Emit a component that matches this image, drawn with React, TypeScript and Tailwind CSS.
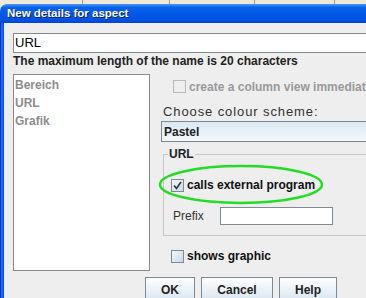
import React from "react";

function Check({ checked = false, disabled = false }: { checked?: boolean; disabled?: boolean }) {
  if (disabled) {
    return <div className="w-[13px] h-[13px] border border-[#b8b8b8] bg-[#eeeeee] shrink-0" />;
  }
  return (
    <div className="w-[13px] h-[13px] border border-[#7a8a99] bg-[linear-gradient(135deg,#f4f8fc_0%,#c8d8ea_100%)] shrink-0 flex items-center justify-center">
      {checked && (
        <svg width="9" height="9" viewBox="0 0 9 9">
          <path d="M1 4.5 L3.5 7.5 L8 1" fill="none" stroke="#333333" strokeWidth="1.6" />
        </svg>
      )}
    </div>
  );
}

function Btn({ label, w }: { label: string; w: string }) {
  return (
    <div
      className={`${w} h-[26px] shrink-0 border border-[#7a8a99] bg-[linear-gradient(180deg,#ffffff_0%,#eef3f9_40%,#d8e4f0_100%)] flex items-center justify-center font-bold text-[12px] text-[#222]`}
    >
      {label}
    </div>
  );
}

export default function App() {
  return (
    <div
      className="w-[366px] h-[298px] overflow-hidden bg-[#eeeeee] flex flex-col relative"
      style={{ fontFamily: '"Liberation Sans", Arial, sans-serif' }}
    >
      {/* window behind */}
      <div className="h-[4px] shrink-0 flex bg-[#ece9d8]">
        <div className="w-[83px] border-r border-[#a0a0a0]" />
        <div className="w-[87px] border-r border-[#a0a0a0]" />
        <div className="w-[85px] border-r border-[#a0a0a0]" />
        <div className="w-[80px] border-r border-[#a0a0a0]" />
      </div>
      {/* title bar */}
      <div className="h-[19px] shrink-0 rounded-tl-[7px] bg-[linear-gradient(180deg,#4a98fa_0%,#0a62ea_18%,#0058e6_50%,#0054e2_80%,#0044cc_100%)] flex items-center pl-[7px]">
        <span className="text-white font-bold text-[11.5px] leading-none [text-shadow:1px_1px_0_#0a1e6e]">
          New details for aspect
        </span>
      </div>
      <div className="flex flex-1 min-h-0">
        {/* left frame */}
        <div className="w-[4px] shrink-0 flex">
          <div className="w-[1px] bg-[#0831d9]" />
          <div className="w-[2px] bg-[#166aee]" />
          <div className="w-[1px] bg-[#0855dd]" />
        </div>
        <div className="flex-1 min-w-0 pl-[9px] pt-[10px] flex flex-col">
          {/* name field */}
          <div className="h-[20px] mr-[-20px] border border-[#7f8a94] bg-white flex items-center pl-[1px] text-[13px] text-black">
            URL
          </div>
          <div className="mt-[1px] leading-[14px] text-[12px] font-bold text-[#222] whitespace-nowrap">
            The maximum length of the name is 20 characters
          </div>
          <div className="flex mt-[6px]">
            {/* list */}
            <div className="w-[137px] h-[197px] shrink-0 border border-[#8a8a8a] bg-white pt-[1px] pl-[1px]">
              <div className="text-[12px] font-bold text-[#8c8c8c] leading-[18px]">Bereich</div>
              <div className="text-[12px] font-bold text-[#8c8c8c] leading-[18px]">URL</div>
              <div className="text-[12px] font-bold text-[#8c8c8c] leading-[18px]">Grafik</div>
            </div>
            {/* right column */}
            <div className="ml-[11px] flex-1 min-w-0 flex flex-col mr-[-30px]">
              <div className="mt-[6px] pl-[12px] flex items-center h-[13px] whitespace-nowrap">
                <Check disabled />
                <span className="ml-[3px] text-[12px] font-bold text-[#999999]">
                  create a column view immediately
                </span>
              </div>
              <div className="mt-[11px] pl-[2px] text-[13px] leading-[15px] text-[#333] whitespace-nowrap tracking-[0.9px]">
                Choose colour scheme:
              </div>
              <div className="mt-[2px] h-[21px] border border-[#7a8a99] bg-[linear-gradient(180deg,#dde8f3_0%,#e8eff7_50%,#f4f8fc_100%)] flex items-center pl-[2px] text-[12px] font-bold text-[#222]">
                Pastel
              </div>
              <fieldset className="ml-[2px] mt-[5px] border border-[#c8c8c8] pb-[10px]">
                <legend className="ml-[4px] px-[1px] text-[12px] font-bold leading-[14px] text-[#222]">URL</legend>
                <div className="mt-[15px] pl-[7px] flex items-center whitespace-nowrap">
                  <Check checked />
                  <span className="ml-[3px] text-[12px] font-bold text-[#111]">calls external program</span>
                </div>
                <div className="mt-[13px] pl-[9px] flex items-center">
                  <span className="w-[47px] text-[12px] text-[#333]">Prefix</span>
                  <div className="w-[113px] h-[18px] border border-[#7f8a94] bg-white" />
                </div>
              </fieldset>
              <div className="mt-[11px] pl-[10px] flex items-center whitespace-nowrap">
                <Check />
                <span className="ml-[3px] text-[12px] font-bold text-[#111]">shows graphic</span>
              </div>
            </div>
          </div>
          {/* buttons */}
          <div className="mt-[6px] pl-[132px] flex gap-[6px]">
            <Btn label="OK" w="w-[50px]" />
            <Btn label="Cancel" w="w-[72px]" />
            <Btn label="Help" w="w-[58px]" />
          </div>
        </div>
      </div>
      {/* green annotation ellipse */}
      <svg className="absolute left-[158px] top-[164px]" width="166" height="41" viewBox="0 0 166 41">
        <ellipse cx="83" cy="20.5" rx="81" ry="18.5" fill="none" stroke="#22dd22" strokeWidth="2.5" />
      </svg>
    </div>
  );
}
